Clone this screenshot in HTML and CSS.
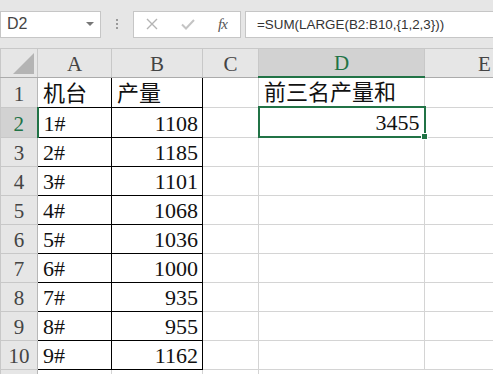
FILE: index.html
```html
<!DOCTYPE html>
<html lang="zh-CN">
<head>
  <meta charset="UTF-8">
  <title>前三名产量和</title>
  <link rel="stylesheet" href="styles.css">
</head>
<body>
  <div class="formula-bar">
    <div class="name-box">
      <span>D2</span>
      <span class="drop"></span>
    </div>
    <div class="grip"><i></i><i></i><i></i></div>
    <div class="fx-buttons">
      <svg class="btn-x" width="12" height="12" viewBox="0 0 12 12"><path d="M1 1 L11 11 M11 1 L1 11" stroke="#b4b4b4" stroke-width="1.4" fill="none"/></svg>
      <svg class="btn-ok" width="14" height="11" viewBox="0 0 14 11"><path d="M1 5.5 L5 9.5 L13 1" stroke="#c4c4c4" stroke-width="2" fill="none"/></svg>
      <span class="fx">fx</span>
    </div>
    <div class="formula">=SUM(LARGE(B2:B10,{1,2,3}))</div>
  </div>

  <table class="sheet">
    <colgroup>
      <col style="width:37px">
      <col style="width:74px">
      <col style="width:91px">
      <col style="width:56px">
      <col style="width:166px">
      <col style="width:120px">
    </colgroup>
    <thead>
      <tr>
        <th class="corner"><span class="tri"></span></th>
        <th>A</th>
        <th>B</th>
        <th>C</th>
        <th class="sel-col">D</th>
        <th>E</th>
      </tr>
    </thead>
    <tbody>
      <tr><th>1</th><td class="b">机台</td><td class="b">产量</td><td></td><td>前三名产量和</td><td></td></tr>
      <tr><th class="sel-row">2</th><td class="b">1#</td><td class="b num">1108</td><td></td><td class="num active">3455</td><td></td></tr>
      <tr><th>3</th><td class="b">2#</td><td class="b num">1185</td><td></td><td></td><td></td></tr>
      <tr><th>4</th><td class="b">3#</td><td class="b num">1101</td><td></td><td></td><td></td></tr>
      <tr><th>5</th><td class="b">4#</td><td class="b num">1068</td><td></td><td></td><td></td></tr>
      <tr><th>6</th><td class="b">5#</td><td class="b num">1036</td><td></td><td></td><td></td></tr>
      <tr><th>7</th><td class="b">6#</td><td class="b num">1000</td><td></td><td></td><td></td></tr>
      <tr><th>8</th><td class="b">7#</td><td class="b num">935</td><td></td><td></td><td></td></tr>
      <tr><th>9</th><td class="b">8#</td><td class="b num">955</td><td></td><td></td><td></td></tr>
      <tr><th>10</th><td class="b">9#</td><td class="b num">1162</td><td></td><td></td><td></td></tr>
      <tr><th class="far">11</th><td></td><td></td><td></td><td colspan="2" class="note">提示：数组公式 按 Ctrl+Shift+Enter</td></tr>
    </tbody>
  </table>
</body>
</html>
```

FILE: styles.css
```css
body { margin: 0; background: #fff; overflow: hidden; width: 493px; height: 374px; }

.formula-bar { height: 48px; background: #e6e6e6; display: flex; align-items: center; font-family: "Liberation Sans", Arial, sans-serif; }
.name-box { box-sizing: border-box; width: 101px; height: 27px; background: #fff; border: 1px solid #c6c6c6; display: flex; align-items: center; justify-content: space-between; padding: 0 6px 0 6px; font-size: 16px; color: #444; }
.drop { width: 0; height: 0; border-left: 4px solid transparent; border-right: 4px solid transparent; border-top: 4px solid #777; }
.grip { width: 32px; display: flex; flex-direction: column; align-items: center; gap: 2px; }
.grip i { width: 2px; height: 2px; background: #9a9a9a; }
.fx-buttons { box-sizing: border-box; width: 108px; height: 27px; background: #fff; border: 1px solid #c6c6c6; display: flex; align-items: center; padding-left: 12px; }
.btn-x { margin-right: 23px; }
.btn-ok { margin-right: 23px; }
.fx { font-family: "Liberation Serif", serif; font-style: italic; font-size: 15px; color: #555; letter-spacing: -1px; }
.formula { box-sizing: border-box; flex: 1; margin-left: 4px; height: 27px; background: #fff; border: 1px solid #c6c6c6; border-right: none; padding-left: 11px; font-size: 13.4px; line-height: 25px; color: #333; white-space: nowrap; }

.sheet { border-collapse: collapse; table-layout: fixed; width: 544px; font-family: "Liberation Serif", "Noto Sans CJK SC", serif; font-size: 22px; color: #111; }
.sheet th { background: #e6e6e6; font-weight: normal; color: #444; font-size: 21px; border: 1px solid #c8c8c8; padding: 0; }
.sheet thead th { height: 27px; border-bottom-color: #ababab; vertical-align: bottom; line-height: 26px; }
.sheet tbody th { border-right-color: #b8b8b8; vertical-align: bottom; line-height: 26px; }
.sheet tbody th.far { line-height: 22px; }
.sheet td { height: 28px; border: 1px solid #d4d4d4; padding: 0 4px 0 5px; vertical-align: bottom; line-height: 26px; white-space: nowrap; overflow: visible; }
.sheet td.b { border-color: #000; }
.sheet td.num { text-align: right; }

.corner { position: relative; }
.tri { position: absolute; right: 3px; bottom: 3px; width: 0; height: 0; border-left: 21px solid transparent; border-bottom: 21px solid #b4b4b4; }

.sheet th.sel-col { background: #d2d2d2; color: #217346; border-bottom: 2px solid #217346; }
.sheet th.sel-row { background: #d2d2d2; color: #217346; border-right: 2px solid #217346; }
.sheet td.active { position: relative; border: 2px solid #217346; }
.sheet td.active::after { content: ""; position: absolute; right: -4px; bottom: -4px; width: 5px; height: 5px; background: #217346; border: 1px solid #fff; }
.sheet td.note { font-family: "Noto Sans CJK SC", sans-serif; font-size: 17px; color: #222; padding-left: 8px; }
```
